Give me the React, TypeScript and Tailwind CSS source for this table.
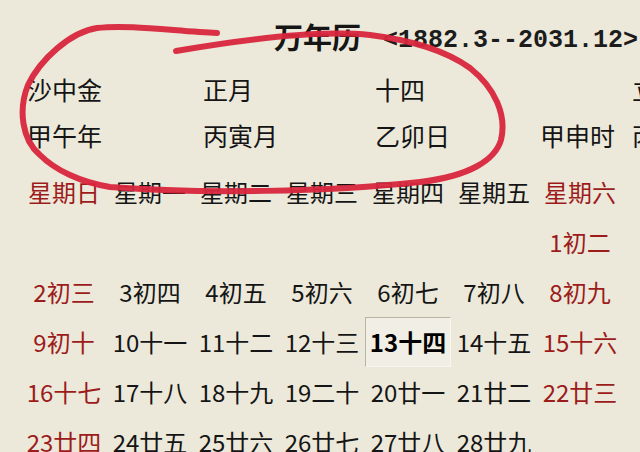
const cjk = { fontFamily: '"Noto Sans CJK SC", "Noto Sans", sans-serif' }

type Cell = { day: number; lunar: string } | null

const weekdays = ['星期日', '星期一', '星期二', '星期三', '星期四', '星期五', '星期六']

const lunar = [
  '初二', '初三', '初四', '初五', '初六', '初七', '初八', '初九', '初十',
  '十一', '十二', '十三', '十四', '十五', '十六', '十七', '十八', '十九', '二十',
  '廿一', '廿二', '廿三', '廿四', '廿五', '廿六', '廿七', '廿八', '廿九',
]

function buildCells(): Cell[] {
  const cells: Cell[] = Array(6).fill(null)
  lunar.forEach((l, i) => cells.push({ day: i + 1, lunar: l }))
  return cells
}

function Annotation() {
  return (
    <svg className="pointer-events-none absolute left-0 top-0" width="640" height="452" viewBox="0 0 640 452">
      <path
        d="M 217 33 C 180 32, 130 24, 97 28 C 70 32, 40 60, 28 85 C 18 110, 22 140, 40 155 C 55 170, 80 182, 110 187 C 200 194, 330 192, 420 182 C 470 176, 495 160, 501 140 C 507 115, 495 88, 470 68 C 445 50, 410 40, 370 35 C 320 30, 240 40, 176 51"
        fill="none"
        stroke="#d8263d"
        strokeWidth="6"
        strokeLinecap="round"
        strokeLinejoin="round"
        opacity="0.95"
      />
    </svg>
  )
}

export default function App() {
  const cells = buildCells()
  return (
    <div className="relative h-[452px] w-[640px] overflow-hidden bg-[#ece9da] text-[#151515]" style={cjk}>
      <div className="mt-[16px] flex h-[40px] items-end pl-[274px]">
        <span className="text-[29px] font-bold leading-[40px]">万年历</span>
        <span
          className="ml-[22px] whitespace-nowrap text-[25px] font-bold leading-[30px] text-[#1c1c1c]"
          style={{ fontFamily: '"Liberation Mono", monospace' }}
        >
          &lt;1882.3--2031.12&gt;
        </span>
      </div>

      <div className="mt-[11px] grid grid-cols-[176px_172px_165px_92px_100px] pl-[27px] text-[25px] whitespace-nowrap">
        <div className="flex h-[46px] items-center">沙中金</div>
        <div className="flex h-[46px] items-center">正月</div>
        <div className="flex h-[46px] items-center">十四</div>
        <div className="flex h-[46px] items-center"></div>
        <div className="flex h-[46px] items-center">立春</div>
        <div className="flex h-[46px] items-center">甲午年</div>
        <div className="flex h-[46px] items-center">丙寅月</div>
        <div className="flex h-[46px] items-center">乙卯日</div>
        <div className="flex h-[46px] items-center">甲申时</div>
        <div className="flex h-[46px] items-center">丙子</div>
      </div>

      <div className="mt-[8px] grid grid-cols-[repeat(7,86px)] pl-[21px] text-[24px] whitespace-nowrap">
        {weekdays.map((w, i) => (
          <div
            key={w}
            className={`flex h-[50px] items-center justify-center ${i === 0 || i === 6 ? 'text-[#9c1c1c]' : ''}`}
          >
            {w}
          </div>
        ))}
        {cells.map((c, i) => {
          const weekend = i % 7 === 0 || i % 7 === 6
          const today = c?.day === 13
          return (
            <div
              key={i}
              className={`flex h-[50px] items-center justify-center ${weekend ? 'text-[#9c1c1c]' : ''} ${
                today ? 'border border-t-[#b9b5a5] border-l-[#b9b5a5] border-r-[#f7f6f0] border-b-[#f7f6f0] bg-[#f1efe5] font-bold text-black' : ''
              }`}
            >
              {c && (
                <>
                  <span>{c.day}</span>
                  <span>{c.lunar}</span>
                </>
              )}
            </div>
          )
        })}
      </div>

      <Annotation />
    </div>
  )
}
